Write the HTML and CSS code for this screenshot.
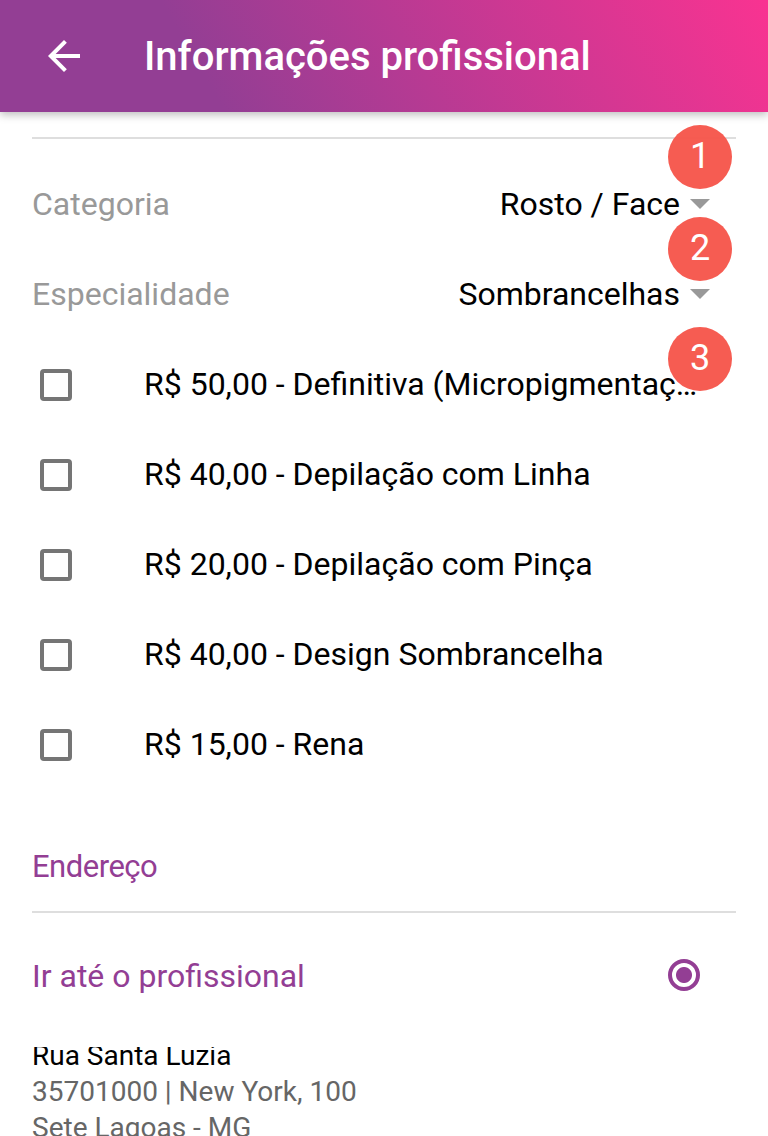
FILE: index.html
```html
<!DOCTYPE html>
<html lang="pt-BR">
<head>
<meta charset="utf-8">
<title>Informações profissional</title>
<link rel="stylesheet" href="styles.css">
</head>
<body>
<header class="toolbar">
  <svg class="back" width="32" height="32" viewBox="4 4 16 16"><path d="M20 11H7.830l5.590-5.590L12 4l-8 8 8 8 1.410-1.410L7.830 13H20v-2z" fill="#fff"/></svg>
  <h1>Informações profissional</h1>
</header>
<main>
  <div class="rule first"></div>
  <div class="row"><span class="label">Categoria</span><span>Rosto / Face</span><i class="caret"></i><b class="badge b1">1</b></div>
  <div class="row"><span class="label">Especialidade</span><span>Sombrancelhas</span><i class="caret"></i><b class="badge b2">2</b></div>
  <div class="row"><i class="box"></i><span class="item">R$ 50,00 - Definitiva (Micropigmentaç…</span><b class="badge b3">3</b></div>
  <div class="row"><i class="box"></i><span class="item">R$ 40,00 - Depilação com Linha</span></div>
  <div class="row"><i class="box"></i><span class="item">R$ 20,00 - Depilação com Pinça</span></div>
  <div class="row"><i class="box"></i><span class="item">R$ 40,00 - Design Sombrancelha</span></div>
  <div class="row"><i class="box"></i><span class="item">R$ 15,00 - Rena</span></div>
  <h2>Endereço</h2>
  <div class="rule"></div>
  <div class="row go"><span>Ir até o profissional</span><i class="radio"></i></div>
  <div class="address"><p class="street">Rua Santa Luzia</p><p>35701000 | New York, 100</p><p>Sete Lagoas - MG</p></div>
</main>
</body>
</html>
```
FILE: styles.css
```css
* { box-sizing: border-box; }
body { margin: 0; height: 1136px; overflow: hidden; background: #fff; color: #000; font: 32px/40px Roboto, sans-serif; }
.toolbar { height: 112px; display: flex; align-items: center; padding-left: 48px; background: linear-gradient(60deg, #933e94 27%, #f93391 100%); box-shadow: 0 3px 8px rgba(0,0,0,.25); }
.back { display: block; }
h1 { margin: 0 0 0 64px; padding-top: 2px; font-size: 40px; font-weight: 500; color: #fff; white-space: nowrap; }
main { padding: 25px 32px 0; }
.rule { height: 2px; background: #dedede; }
.first { margin-bottom: 20px; }
.row { position: relative; display: flex; align-items: center; height: 90px; }
.label { color: #999; flex: 1; }
.caret { width: 0; height: 0; margin: 0 26px 0 10px; border: 10px solid transparent; border-top-color: #999; border-bottom: 0; }
.box { width: 32px; height: 32px; margin: 2px 72px 0 8px; border: 4px solid #757575; border-radius: 4px; flex: none; }
.item { white-space: nowrap; }
.badge { position: absolute; right: 4px; width: 64px; height: 64px; border-radius: 50%; background: rgba(245,83,73,.95); color: #fff; font-weight: 400; font-size: 36px; line-height: 62px; text-align: center; }
.b1 { top: -34px; }
.b2 { top: -32px; }
.b3 { top: -12px; }
h2 { margin: 58px 0 24px; font-size: 31px; letter-spacing: -.5px; font-weight: 400; color: #933e94; }
.go { margin-top: 18px; justify-content: space-between; color: #933e94; }
.radio { width: 32px; height: 32px; margin: 0 36px 2px 0; border: 4px solid #933e94; border-radius: 50%; background: radial-gradient(circle, #933e94 7.500px, transparent 8.500px); }
.address { margin-top: 26px; height: 89px; overflow: hidden; font-size: 28px; line-height: 36px; color: #666; }
.address p { margin: 0; }
.address .street { color: #000; margin-top: -9px; }
```
